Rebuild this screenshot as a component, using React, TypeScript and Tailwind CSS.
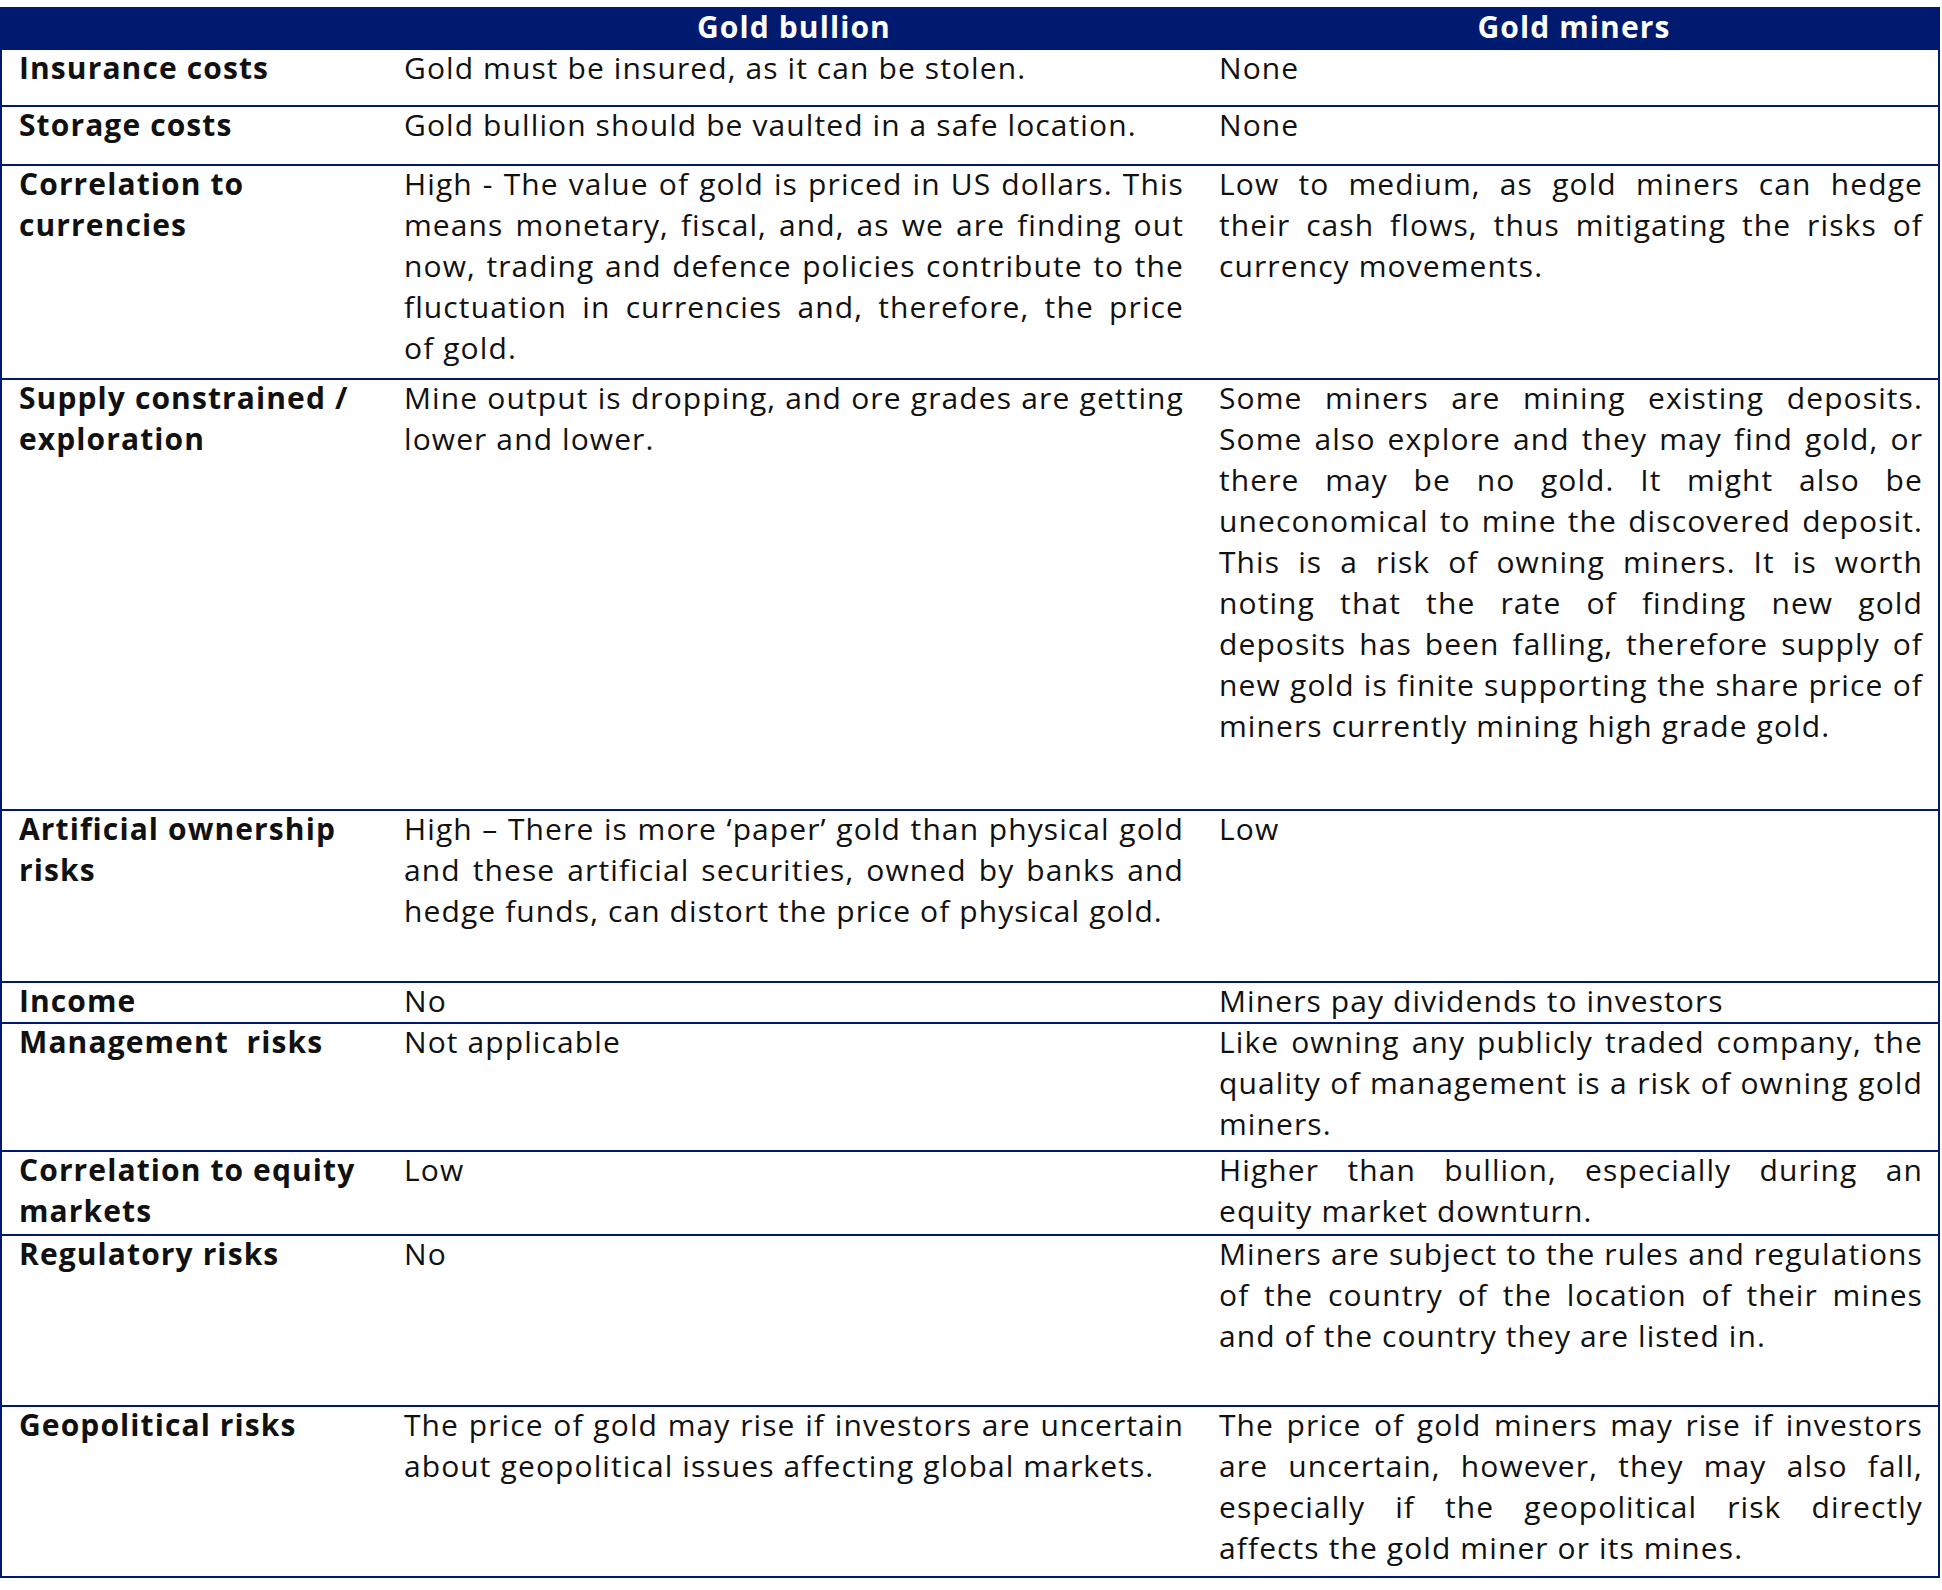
const rows: [string, string, string, number][] = [
  ["Insurance costs", "Gold must be insured, as it can be stolen.", "None", 57],
  ["Storage costs", "Gold bullion should be vaulted in a safe location.", "None", 59],
  ["Correlation to currencies", "High - The value of gold is priced in US dollars. This means monetary, fiscal, and, as we are finding out now, trading and defence policies contribute to the fluctuation in currencies and, therefore, the price of gold.", "Low to medium, as gold miners can hedge their cash flows, thus mitigating the risks of currency movements.", 214],
  ["Supply constrained / exploration", "Mine output is dropping, and ore grades are getting lower and lower.", "Some miners are mining existing deposits. Some also explore and they may find gold, or there may be no gold. It might also be uneconomical to mine the discovered deposit. This is a risk of owning miners. It is worth noting that the rate of finding new gold deposits has been falling, therefore supply of new gold is finite supporting the share price of miners currently mining high grade gold.", 431],
  ["Artificial ownership risks", "High \u2013 There is more \u2018paper\u2019 gold than physical gold and these artificial securities, owned by banks and hedge funds, can distort the price of physical gold.", "Low", 172],
  ["Income", "No", "Miners pay dividends to investors", 41],
  ["Management  risks", "Not applicable", "Like owning any publicly traded company, the quality of management is a risk of owning gold miners.", 128],
  ["Correlation to equity markets", "Low", "Higher than bullion, especially during an equity market downturn.", 84],
  ["Regulatory risks", "No", "Miners are subject to the rules and regulations of the country of the location of their mines and of the country they are listed in.", 171],
  ["Geopolitical risks", "The price of gold may rise if investors are uncertain about geopolitical issues affecting global markets.", "The price of gold miners may rise if investors are uncertain, however, they may also fall, especially if the geopolitical risk directly affects the gold miner or its mines.", 171],
];

export default function App() {
  return (
    <div className="bg-white w-[1942px] h-[1590px] pt-[7px]" style={{ fontFamily: '"Open Sans", "Noto Sans", sans-serif' }}>
      <div className="w-[1940px] border-x-2 border-[#001a70] text-[30px] leading-[41px] tracking-[1.1px] text-[#111]">
        <div className="grid grid-cols-[393px_815px_728px] h-[43px] bg-[#001a70] text-white font-bold items-center">
          <div />
          <div className="text-center pr-[17px] -mt-[4px]">Gold bullion</div>
          <div className="text-center -mt-[4px]">Gold miners</div>
        </div>
        {rows.map(([a, b, c, h]) => (
          <div key={a} className="grid grid-cols-[393px_815px_728px] border-b-2 border-[#001a70]" style={{ height: h }}>
            <div className="pl-[17px] pr-2 font-bold -mt-[3px] whitespace-pre-wrap">{a}</div>
            <div className="pl-[9px] pr-[26px] text-justify -mt-[3px]">{b}</div>
            <div className="pl-[9px] pr-[15px] text-justify -mt-[3px]">{c}</div>
          </div>
        ))}
      </div>
    </div>
  );
}
